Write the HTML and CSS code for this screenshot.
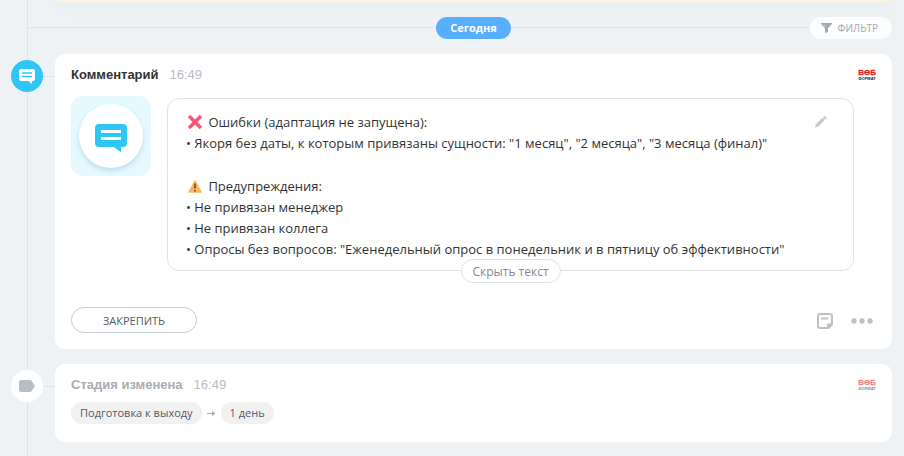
FILE: index.html
```html
<!DOCTYPE html>
<html lang="ru">
<head>
<meta charset="utf-8">
<meta name="viewport" content="width=device-width, initial-scale=1">
<title>Таймлайн</title>
<link rel="stylesheet" href="styles.css">
</head>
<body>
<main class="timeline">
  <div class="planned"></div>

  <div class="day">
    <span class="day-label">Сегодня</span>
    <button class="filter" type="button">
      <svg width="11" height="10" viewBox="0 0 11 10" aria-hidden="true"><path fill="#a3a9b1" d="M0 0h11v1L7 5v4L4 10V5L0 1z"/><path stroke="#fcfdfd" stroke-width="0.700" d="M3 1.500l1.500 1.500" fill="none"/></svg>
      <span>ФИЛЬТР</span>
    </button>
  </div>

  <article class="entry">
    <span class="marker marker-comment">
      <svg width="16" height="15" viewBox="0 0 16 15" aria-hidden="true"><path fill="#fff" d="M2 0h12a2 2 0 0 1 2 2v8a2 2 0 0 1-2 2h-1v3l-3.500-3H2a2 2 0 0 1-2-2V2a2 2 0 0 1 2-2z"/><path stroke="#2fc6f6" stroke-width="1.500" d="M3 4h10M3 7.500h10"/></svg>
    </span>
    <header class="entry-head">
      <h2 class="title">Комментарий</h2>
      <time class="time">16:49</time>
      <svg class="logo" width="18" height="12" viewBox="0 0 18 12" role="img" aria-label="Веб Формат"><text class="logo-top" x="9" y="6">ВӨБ</text><text class="logo-bottom" x="9" y="11">ФОРМАТ</text></svg>
    </header>
    <div class="entry-body">
      <div class="picture">
        <div class="picture-disc">
          <svg width="32" height="29" viewBox="0 0 32 29" aria-hidden="true"><path fill="#2fc6f6" d="M4 0h24a4 4 0 0 1 4 4v15a4 4 0 0 1-4 4h-2v5.500L19 23H4a4 4 0 0 1-4-4V4a4 4 0 0 1 4-4z"/><path stroke="#fff" stroke-width="3" d="M6 7.500h20M6 14.500h20"/></svg>
        </div>
      </div>
      <div class="comment">
        <div class="comment-text">
          <p class="alert"><svg class="emoji" width="16" height="16" viewBox="0 0 16 16" role="img" aria-label="Ошибка"><path fill="none" stroke="#fa5579" stroke-width="3.500" d="M2 2l12 12M14 2L2 14"/></svg> Ошибки (адаптация не запущена):</p>
          <p>• Якоря без даты, к которым привязаны сущности: "1 месяц", "2 месяца", "3 месяца (финал)"</p>
          <p><br></p>
          <p class="alert"><svg class="emoji" width="16" height="16" viewBox="0 0 16 16" role="img" aria-label="Внимание"><path fill="#ffb457" stroke="#ffb457" stroke-width="1.500" stroke-linejoin="round" d="M8 3l6 11H2z"/><path stroke="#4c4343" stroke-width="1.500" d="M8 5.500v5M8 12v1.500"/></svg> Предупреждения:</p>
          <p>• Не привязан менеджер</p>
          <p>• Не привязан коллега</p>
          <p>• Опросы без вопросов: "Еженедельный опрос в понедельник и в пятницу об эффективности"</p>
        </div>
        <button class="edit" type="button" aria-label="Редактировать">
          <svg width="12" height="12" viewBox="0 0 12 12" aria-hidden="true"><path fill="#c8c9cb" d="M1 8l6.500-6.300 2.300 2.300L3.500 10.500 0 11.500zM8 1.200l1-1a.8.8 0 0 1 1 0L11.500 1.500a.8.8 0 0 1 0 1l-1.100 1.200z"/></svg>
        </button>
        <button class="collapse" type="button">Скрыть текст</button>
      </div>
    </div>
    <footer class="entry-foot">
      <button class="pin" type="button">ЗАКРЕПИТЬ</button>
      <div class="tools">
        <button class="tool" type="button" aria-label="Заметка">
          <svg width="16" height="16" viewBox="0 0 16 16" aria-hidden="true"><path fill="none" stroke="#bdc1c6" stroke-width="2" d="M3 1h10a2 2 0 0 1 2 2v8l-4 4H3a2 2 0 0 1-2-2V3a2 2 0 0 1 2-2z"/><path fill="#bdc1c6" d="M10 16v-4.500a1 1 0 0 1 1-1h5v1L11.500 16zM4 4.500h7v2H4z"/></svg>
        </button>
        <button class="tool" type="button" aria-label="Ещё">
          <svg width="22" height="6" viewBox="0 0 22 6" fill="#bdc1c6" aria-hidden="true"><circle cx="3" cy="3" r="2.700"/><circle cx="11" cy="3" r="2.700"/><circle cx="19" cy="3" r="2.700"/></svg>
        </button>
      </div>
    </footer>
  </article>

  <article class="entry entry-stage">
    <span class="marker marker-stage">
      <svg width="16" height="12" viewBox="0 0 16 12" aria-hidden="true"><path fill="#b9bec4" d="M2.500 0H11a2 2 0 0 1 1.500.7l3 4.300a2 2 0 0 1 0 2l-3 4.300A2 2 0 0 1 11 12H2.500A2.500 2.500 0 0 1 0 9.500v-7A2.500 2.500 0 0 1 2.500 0z"/></svg>
    </span>
    <header class="entry-head">
      <h2 class="title">Стадия изменена</h2>
      <time class="time">16:49</time>
      <svg class="logo" width="18" height="12" viewBox="0 0 18 12" role="img" aria-label="Веб Формат"><text class="logo-top" x="9" y="6">ВӨБ</text><text class="logo-bottom" x="9" y="11">ФОРМАТ</text></svg>
    </header>
    <div class="stages">
      <span class="stage">Подготовка к выходу</span>
      <svg width="9" height="7" viewBox="0 0 9 7" aria-hidden="true"><path fill="none" stroke="#a8adb4" d="M0 3.500h7"/><path fill="#a8adb4" d="M5 1l3.500 2.500L5 6z"/></svg>
      <span class="stage">1 день</span>
    </div>
  </article>
</main>
</body>
</html>
```
FILE: styles.css
```css
* {
  box-sizing: border-box;
}

body {
  margin: 0;
  min-height: 100vh;
  display: flex;
  background: #eef2f4;
  color: #333;
  font-family: "Open Sans", "Noto Sans", sans-serif;
  font-size: 13px;
}

button {
  margin: 0;
  padding: 0;
  border: 0;
  background: none;
  font-family: inherit;
  cursor: pointer;
}

svg {
  display: block;
}

.timeline {
  position: relative;
  flex: 1;
  min-width: 0;
  padding: 0 12px 0 55px;
}

.timeline::before {
  content: "";
  position: absolute;
  top: 0;
  bottom: 0;
  left: 27px;
  width: 1px;
  background: #dfe3e6;
}

.planned {
  height: 2px;
  margin: 0 2px;
  border-radius: 0 0 8px 8px;
  background: #fef5dc;
  box-shadow: 0 4px 16px rgba(83, 92, 105, 0.1);
}

.day {
  display: grid;
  grid-template-columns: 1fr auto 1fr;
  align-items: center;
  margin: 15px 0 15px -28px;
  padding-left: 28px;
  background: linear-gradient(#dfe3e6, #dfe3e6) 0 10px / 100% 1px no-repeat;
}

.day-label {
  grid-column: 2;
  padding: 0 14px;
  border-radius: 11px;
  background: #58aeff;
  color: #fff;
  font-size: 11px;
  font-weight: 700;
  line-height: 22px;
}

.filter {
  justify-self: end;
  display: flex;
  align-items: center;
  gap: 6px;
  height: 22px;
  padding: 0 14px 0 11px;
  border-radius: 11px;
  background: #fcfdfd;
  color: #a3a9b1;
  font-size: 10px;
  font-weight: 500;
}

.entry {
  position: relative;
  margin-bottom: 15px;
  padding: 12px 16px 16px;
  border-radius: 10px;
  background: #fff;
}

.entry::before {
  content: "";
  position: absolute;
  top: 22px;
  left: -28px;
  width: 28px;
  height: 1px;
  background: #dfe3e6;
}

.marker {
  position: absolute;
  top: 6px;
  left: -44px;
  display: grid;
  place-items: center;
  width: 32px;
  height: 32px;
  border-radius: 50%;
}

.marker-comment {
  background: #2fc6f6;
}

.marker-stage {
  background: #fff;
}

.entry-head {
  display: flex;
  align-items: center;
  gap: 11px;
  height: 18px;
  font-family: "Liberation Sans", Arial, sans-serif;
}

.title {
  margin: 0;
  font-size: 13px;
  font-weight: 700;
  line-height: 18px;
}

.time {
  color: #b9bdc3;
  font-size: 13px;
  line-height: 18px;
}

.logo {
  margin-left: auto;
}

.logo text {
  font-family: "Liberation Sans", Arial, sans-serif;
  font-weight: 700;
  text-anchor: middle;
}

.logo-top {
  fill: #e02020;
  stroke: #e02020;
  stroke-width: 0.3px;
  font-size: 8px;
}

.logo-bottom {
  fill: #222;
  font-size: 4px;
}

.entry-body {
  display: flex;
  align-items: flex-start;
  gap: 16px;
  margin-top: 12px;
}

.picture {
  display: grid;
  place-items: center;
  flex: none;
  width: 80px;
  height: 80px;
  border-radius: 12px;
  background: #e5f9ff;
}

.picture-disc {
  display: grid;
  place-items: center;
  width: 64px;
  height: 64px;
  padding-top: 4px;
  border-radius: 50%;
  background: #fff;
  box-shadow: 0 3px 5px rgba(47, 120, 150, 0.2);
}

.comment {
  position: relative;
  flex: 1;
  min-width: 0;
  margin: 2px 22px 0 0;
  padding: 12px 18px 10px;
  border: 1px solid #e1e3e5;
  border-radius: 12px;
}

.comment-text p {
  margin: 0;
  line-height: 21px;
}

.comment-text .alert {
  line-height: 22px;
}

.emoji {
  display: inline-block;
  margin: 0 2px 0 1px;
  vertical-align: -3px;
}

.edit {
  position: absolute;
  top: 17px;
  right: 26px;
}

.collapse {
  position: absolute;
  bottom: -13px;
  left: 50%;
  height: 24px;
  padding: 0 11px;
  border: 1px solid #e1e3e5;
  border-radius: 12px;
  background: #fff;
  color: #828b95;
  font-size: 12px;
  white-space: nowrap;
  transform: translateX(-50%);
}

.entry-foot {
  display: flex;
  align-items: center;
  justify-content: space-between;
  margin-top: 36px;
}

.pin {
  width: 126px;
  height: 26px;
  border: 1px solid #c6cdd3;
  border-radius: 13px;
  color: #525c69;
  font-size: 11px;
  font-weight: 500;
}

.tools {
  display: flex;
  align-items: center;
  gap: 18px;
  padding: 2px 3px 0 0;
}

.entry-stage .title {
  color: #a8adb4;
}

.entry-stage .logo {
  opacity: 0.55;
}

.stages {
  display: flex;
  align-items: center;
  gap: 5px;
  margin-top: 8px;
}

.entry-stage {
  padding-bottom: 18px;
}

.stage {
  padding: 0 9px;
  border-radius: 11px;
  background: #f1f1f1;
  color: #525c69;
  font-size: 11px;
  line-height: 22px;
}
```
